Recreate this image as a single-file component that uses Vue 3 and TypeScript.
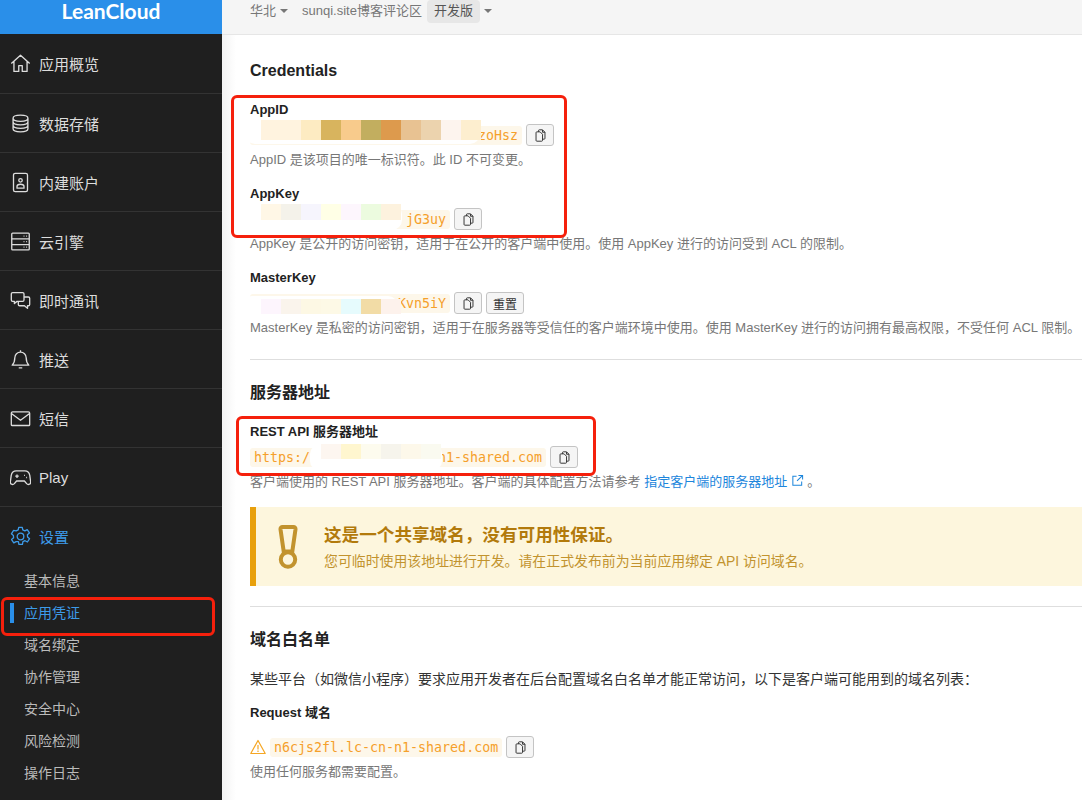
<template>
  <div class="app">
    <aside class="side">
      <div class="logo">LeanCloud</div>
      <nav>
        <a v-for="item in nav" :key="item.label" class="nav-item" :class="{ on: item.label === '设置' }">
          <svg class="nav-icon" viewBox="0 0 24 24"><path :d="item.icon" /></svg>
          <span>{{ item.label }}</span>
        </a>
      </nav>
      <ul class="sub">
        <li v-for="s in subNav" :key="s" :class="{ on: s === '应用凭证' }">{{ s }}</li>
      </ul>
    </aside>

    <div class="main">
      <header class="top">
        <span>华北</span><i class="caret" />
        <span class="app-name">sunqi.site博客评论区</span>
        <span class="badge">开发版</span><i class="caret" />
      </header>

      <section class="content">
        <h2 class="first">Credentials</h2>

        <div v-for="f in fields" :key="f.label" class="field">
          <div class="label">{{ f.label }}</div>
          <div class="row">
            <code class="code" :style="{ width: f.width + 'px' }">{{ f.tail }}</code>
            <button class="btn"><svg viewBox="0 0 16 16"><path :d="copyIcon" /></svg></button>
            <button v-if="f.reset" class="btn text">重置</button>
            <div class="blur" :style="blobStyle(f.blob)">
              <b
                v-for="c in f.blob.cells"
                :key="c"
                :style="{ background: c, height: f.blob.cellH + 'px', marginTop: f.blob.cellTop + 'px' }"
              />
            </div>
          </div>
          <p class="hint">{{ f.hint }}</p>
        </div>

        <hr class="rule-a">
        <h2>服务器地址</h2>
        <div class="label rest">REST API 服务器地址</div>
        <div class="row">
          <code class="code split" :style="{ width: '296px' }"><span>https:/</span><span>n1-shared.com</span></code>
          <button class="btn"><svg viewBox="0 0 16 16"><path :d="copyIcon" /></svg></button>
          <div class="blur" :style="blobStyle(restBlob)">
            <b
              v-for="c in restBlob.cells"
              :key="c"
              :style="{ background: c, height: restBlob.cellH + 'px', marginTop: restBlob.cellTop + 'px' }"
            />
          </div>
        </div>
        <p class="hint">
          客户端使用的 REST API 服务器地址。客户端的具体配置方法请参考
          <a class="link">指定客户端的服务器地址
            <svg viewBox="0 0 14 14"><path d="M6 2.5H2v9.5h9.5V8M8 1.5h4.5V6M12.5 1.5 6.5 7.5" /></svg>
          </a>
          。
        </p>

        <div class="callout">
          <svg class="callout-icon" viewBox="0 0 20 44">
            <path d="M4.5 2h11a2 2 0 0 1 2 2.2l-3.2 22.3h-8.600L2.500 4.200A2 2 0 0 1 4.500 2Z" />
            <circle cx="10" cy="34.500" r="7.200" />
          </svg>
          <div>
            <div class="callout-title">这是一个共享域名，没有可用性保证。</div>
            <div class="callout-text">您可临时使用该地址进行开发。请在正式发布前为当前应用绑定 API 访问域名。</div>
          </div>
        </div>

        <hr class="rule-b">
        <h2>域名白名单</h2>
        <p class="para">某些平台（如微信小程序）要求应用开发者在后台配置域名白名单才能正常访问，以下是客户端可能用到的域名列表：</p>
        <div class="label req">Request 域名</div>
        <div class="row req-row">
          <svg class="warn" viewBox="0 0 16 16">
            <path d="M8 1.500 15.200 14.500H.800ZM8 6v4.600M8 11.600v1.300" />
          </svg>
          <code class="code">n6cjs2fl.lc-cn-n1-shared.com</code>
          <button class="btn"><svg viewBox="0 0 16 16"><path :d="copyIcon" /></svg></button>
        </div>
        <p class="hint">使用任何服务都需要配置。</p>
      </section>
    </div>

    <div class="mark mark-side" />
    <div class="mark mark-keys" />
    <div class="mark mark-rest" />
  </div>
</template>

<script setup lang="ts">
type Blob = {
  left: number
  top: number
  width: number
  height: number
  pad: number
  cellH: number
  cellTop: number
  cells: string[]
}

const copyIcon = 'M5.500 3.500V2a1 1 0 0 1 1-1h4l3 3v7.500a1 1 0 0 1-1 1h-2M10.500 1.200V4h3M3.500 3.500h4l3 3V14a1 1 0 0 1-1 1h-6a1 1 0 0 1-1-1V4.500a1 1 0 0 1 1-1Z'

const nav = [
  { label: '应用概览', icon: 'M1.500 12 12 2.500 22.500 12M4.500 9.500V21h5.500v-6.500h4V21h5.500V9.500' },
  { label: '数据存储', icon: 'M3.500 6c0-2 3.800-3.500 8.500-3.500S20.500 4 20.500 6v12c0 2-3.800 3.500-8.500 3.500S3.500 20 3.500 18ZM3.500 6c0 2 3.800 3.500 8.500 3.500S20.500 8 20.500 6M3.500 10c0 2 3.800 3.500 8.500 3.500s8.500-1.500 8.500-3.500M3.500 14c0 2 3.800 3.500 8.500 3.500s8.500-1.500 8.500-3.500' },
  { label: '内建账户', icon: 'M6 1.500h12a2 2 0 0 1 2 2v17a2 2 0 0 1-2 2H6a2 2 0 0 1-2-2v-17a2 2 0 0 1 2-2ZM12 7.500a2 2 0 1 0 0 4 2 2 0 0 0 0-4ZM8 18.500v-2c0-1.500 1.500-2.500 4-2.500s4 1 4 2.500v2Z' },
  { label: '云引擎', icon: 'M3 2.500h18a1 1 0 0 1 1 1v17a1 1 0 0 1-1 1H3a1 1 0 0 1-1-1v-17a1 1 0 0 1 1-1ZM2 9h20M2 15.500h20M15.500 5.800h1M18.500 5.800h1M15.500 12.200h1M18.500 12.200h1M15.500 18.500h1M18.500 18.500h1' },
  { label: '即时通讯', icon: 'M3 3h11.500a1.500 1.500 0 0 1 1.500 1.500v7a1.500 1.500 0 0 1-1.500 1.500H8l-3 2.500V13H3a1.500 1.500 0 0 1-1.500-1.500v-7A1.500 1.500 0 0 1 3 3ZM16 8h5a1.500 1.500 0 0 1 1.500 1.500v7A1.500 1.500 0 0 1 21 18h-1v3l-3.500-3H11a1.500 1.500 0 0 1-1.500-1.500V13' },
  { label: '推送', icon: 'M12 3.500a6.500 6.500 0 0 1 6.500 6.500c0 5 1 6.500 3 8.500h-19c2-2 3-3.500 3-8.500A6.500 6.500 0 0 1 12 3.500ZM12 1.500v2M10 21.500h4' },
  { label: '短信', icon: 'M3 4.500h18a1.500 1.500 0 0 1 1.500 1.500v13a1 1 0 0 1-1 1h-19a1 1 0 0 1-1-1V6A1.500 1.500 0 0 1 3 4.500ZM2 6.500l10 7.500 10-7.500' },
  { label: 'Play', icon: 'M7 4.500h10c3 0 5 2 5.600 5l1 7.500c.3 2.500-2.600 4-4.600 2l-2.500-3h-9L5 19c-2 2-4.900.5-4.600-2l1-7.500C2 6.500 4 4.500 7 4.500ZM6 10.500h4M8 8.500v4M16 9.500h1M18.500 12h1' },
  { label: '设置', icon: 'M10 1.500h4l.6 3 2.400 1.100 2.700-1.500 2.500 3.800-2.300 2 .2 2.600 2.300 2-2.500 3.800-2.700-1.500-2.400 1.100-.6 3h-4l-.6-3L7 17.800l-2.700 1.500-2.500-3.800 2.300-2-.2-2.600-2.300-2 2.500-3.800L7 5.600l2.400-1.100ZM12 8.200a3.800 3.800 0 1 0 0 7.600 3.800 3.800 0 0 0 0-7.600Z' },
]

const subNav = ['基本信息', '应用凭证', '域名绑定', '协作管理', '安全中心', '风险检测', '操作日志']

const fields: { label: string; tail: string; width: number; reset?: boolean; hint: string; blob: Blob }[] = [
  {
    label: 'AppID',
    tail: 'zoHsz',
    width: 272,
    hint: 'AppID 是该项目的唯一标识符。此 ID 不可变更。',
    blob: {
      left: -5, top: -4, width: 235, height: 24, pad: 16, cellH: 20, cellTop: 0,
      cells: ['#fff3df', '#fff3df ', '#fdebc2', '#d8b45e', '#f8cb8c', '#c2ae5f', '#dd9a4d', '#e8c292', '#ecd3ae', '#fdf4ee', '#fdeecf'],
    },
  },
  {
    label: 'AppKey',
    tail: 'jG3uy',
    width: 200,
    hint: 'AppKey 是公开的访问密钥，适用于在公开的客户端中使用。使用 AppKey 进行的访问受到 ACL 的限制。',
    blob: {
      left: -8, top: -4, width: 160, height: 26, pad: 19, cellH: 16, cellTop: 0,
      cells: ['#fff7e6', '#f4f2ea', '#f6f5fd', '#ffffe6', '#fdf6fd', '#ecfbdf', '#fdf2de'],
    },
  },
  {
    label: 'MasterKey',
    tail: 'Kvn5iY',
    width: 200,
    reset: true,
    hint: 'MasterKey 是私密的访问密钥，适用于在服务器等受信任的客户端环境中使用。使用 MasterKey 进行的访问拥有最高权限，不受任何 ACL 限制。',
    blob: {
      left: -8, top: 4, width: 156, height: 24, pad: 19, cellH: 15, cellTop: 3,
      cells: ['#fdf5fd', '#faf4ec', '#fdf8e4', '#fdf9e6', '#e6fbfd', '#f2dca6', '#fdf2ec'],
    },
  },
]

const restBlob: Blob = {
  left: 60, top: -2, width: 132, height: 27, pad: 11, cellH: 15, cellTop: 0,
  cells: ['#fdf6f0', '#fff6cf', '#fdfbee', '#f6f4ec', '#fdf8ea', '#fafaf0'],
}

function blobStyle (b: Blob) {
  return {
    left: b.left + 'px',
    top: b.top + 'px',
    width: b.width + 'px',
    height: b.height + 'px',
    paddingLeft: b.pad + 'px',
  }
}
</script>

<style>
html, body {
  margin: 0;
  background: #fff;
}
</style>

<style scoped>
.app {
  position: relative;
  display: flex;
  width: 1082px;
  height: 800px;
  overflow: hidden;
  font-family: "Liberation Sans", "Noto Sans CJK SC", sans-serif;
  font-size: 13px;
  color: #222;
}

.side {
  flex: none;
  width: 222px;
  background: #1f1f1f;
}

.logo {
  height: 34px;
  background: #2a8fe9;
  color: #fff;
  font-family: Lato, sans-serif;
  font-weight: 700;
  font-size: 21px;
  line-height: 21px;
  text-align: center;
}

.nav-item {
  display: flex;
  align-items: center;
  gap: 8px;
  height: 58px;
  padding-left: 10px;
  border-bottom: 1px solid #333;
  color: #ddd;
  font-size: 15px;
}

.nav-item:first-child {
  height: 59px;
}

.nav-item.on {
  color: #3d9be9;
  border-bottom: 0;
}

.nav-icon {
  width: 21px;
  height: 21px;
  fill: none;
  stroke: currentColor;
  stroke-width: 1.500;
  stroke-linejoin: round;
}

.sub {
  list-style: none;
  margin: 0;
  padding: 0;
}

.sub li {
  position: relative;
  height: 32px;
  padding-left: 24px;
  color: #bbb;
  font-size: 14px;
  line-height: 32px;
}

.sub li.on {
  color: #3d9be9;
}

.sub li.on::before {
  content: "";
  position: absolute;
  left: 10px;
  top: 6px;
  width: 4px;
  height: 20px;
  background: #2a8fe9;
}

.main {
  flex: 1;
  min-width: 0;
  background: linear-gradient(90deg, #f3f3f3, #fff 14px);
}

.top {
  display: flex;
  align-items: flex-start;
  height: 34px;
  padding: 1px 0 0 28px;
  box-sizing: content-box;
  background: #f5f5f5;
  border-bottom: 1px solid #e6e6e6;
  color: #777;
  font-size: 13px;
  line-height: 19px;
  height: 33px;
}

.caret {
  width: 0;
  height: 0;
  margin: 8px 0 0 4px;
  border: 4px solid transparent;
  border-top-color: #777;
  border-bottom: 0;
}

.app-name {
  margin-left: 14px;
}

.badge {
  margin: -1px 0 0 5px;
  width: 53px;
  height: 23px;
  line-height: 21px;
  text-align: center;
  background: #e7e7e7;
  border-radius: 4px;
  color: #555;
}

.badge + .caret {
  margin-left: 4px;
}

.content {
  padding: 26px 0 0 28px;
  white-space: nowrap;
}

h2 {
  margin: 23px 0 0;
  font-size: 16px;
  line-height: 20px;
  font-weight: 700;
  color: #222;
}

h2.first {
  margin-top: 0;
}

.field {
  margin-top: 16px;
}

h2.first + .field {
  margin-top: 20px;
}

.label {
  font-weight: 700;
  font-size: 13px;
  line-height: 18px;
  color: #222;
}

.rest {
  margin-top: 20px;
}

.req {
  margin-top: 15px;
}

.row {
  position: relative;
  display: flex;
  align-items: center;
  gap: 4px;
  height: 22px;
  margin-top: 5px;
}

.code {
  display: flex;
  align-items: center;
  justify-content: flex-end;
  box-sizing: border-box;
  height: 19px;
  padding: 0 4px;
  background: #fdf7ea;
  border-radius: 3px;
  font-family: "DejaVu Sans Mono", "Liberation Mono", monospace;
  font-size: 13.300px;
  color: #f5a02a;
}

.split {
  justify-content: space-between;
}

.btn {
  display: flex;
  align-items: center;
  justify-content: center;
  box-sizing: border-box;
  width: 28px;
  height: 22px;
  padding: 0;
  background: #f5f5f5;
  border: 1px solid #c4c4c4;
  border-radius: 3px;
  font-family: inherit;
  font-size: 12px;
  color: #333;
}

.btn svg {
  width: 13px;
  height: 13px;
  fill: none;
  stroke: #333;
  stroke-width: 1.200;
}

.btn.text {
  width: 38px;
}

.blur {
  position: absolute;
  display: flex;
  box-sizing: border-box;
  background: #fff;
  border-radius: 10px;
}

.blur b {
  flex: none;
  width: 20px;
}

.hint {
  margin: 5px 0 0;
  line-height: 18px;
  color: #777;
  font-size: 13px;
}

.link {
  color: #1d86dc;
}

.link svg {
  width: 13px;
  height: 13px;
  vertical-align: -1px;
  fill: none;
  stroke: #1d86dc;
  stroke-width: 1.100;
}

.rule-a,
.rule-b {
  border: 0;
  height: 1px;
  background: #dedede;
  margin: 22px 0 0;
}

.callout {
  display: flex;
  align-items: center;
  height: 79px;
  margin-top: 16px;
  background: #fdf6dd;
  border-left: 6px solid #e8a00c;
}

.callout-icon {
  flex: none;
  width: 20px;
  height: 44px;
  margin: 0 26px 0 22px;
  fill: none;
  stroke: #c2932e;
  stroke-width: 4;
}

.callout-title {
  font-size: 17.600px;
  line-height: 26px;
  font-weight: 700;
  color: #b27a0c;
}

.callout-text {
  margin-top: 3px;
  font-size: 13.900px;
  line-height: 20px;
  color: #c2932e;
}

.rule-b {
  margin-top: 20px;
}

.para {
  margin: 19px 0 0;
  font-size: 14px;
  line-height: 20px;
  color: #333;
}

.req-row {
  margin-top: 14px;
}

.warn {
  flex: none;
  width: 16px;
  height: 16px;
  fill: none;
  stroke: #f5a623;
  stroke-width: 1.200;
  stroke-linejoin: round;
}

.mark {
  position: absolute;
  box-sizing: border-box;
  border: 3px solid #f5200c;
  border-radius: 6px;
}

.mark-side {
  left: 1px;
  top: 597px;
  width: 214px;
  height: 39px;
}

.mark-keys {
  left: 231px;
  top: 95px;
  width: 336px;
  height: 143px;
}

.mark-rest {
  left: 236px;
  top: 416px;
  width: 360px;
  height: 60px;
}
</style>
